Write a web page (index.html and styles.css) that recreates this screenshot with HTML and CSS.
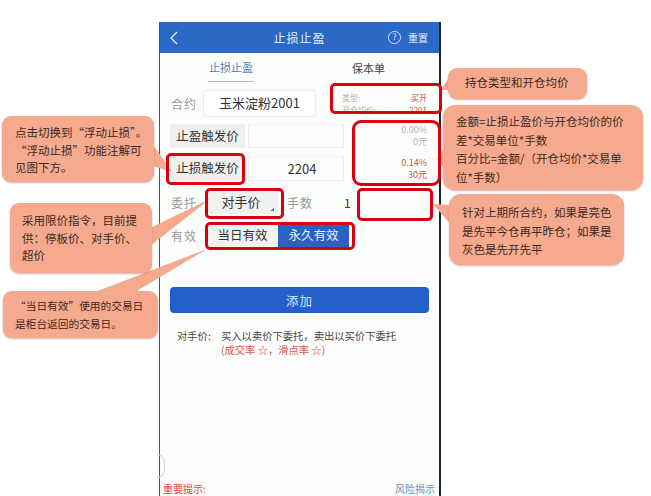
FILE: index.html
```html
<!DOCTYPE html>
<html lang="zh">
<head>
<meta charset="utf-8">
<title>止损止盈</title>
<link rel="stylesheet" href="styles.css">
</head>
<body>
<div class="stage">
  <main class="phone">
    <header class="nav">
      <svg class="back" viewBox="0 0 10 16" width="10" height="16"><path d="M8 2 L2 8 L8 14" fill="none" stroke="#dfe9f8" stroke-width="1.3"/></svg>
      <div class="nav-title">止损止盈</div>
      <div class="nav-right">
        <svg class="help" viewBox="0 0 16 16" width="15" height="15"><circle cx="8" cy="8" r="6.5" fill="none" stroke="#dfe9f8" stroke-width="1"/><text x="8" y="11" text-anchor="middle" class="help-q">?</text></svg>
        <span>重置</span>
      </div>
    </header>
    <nav class="tabs">
      <div class="tab tab-on"><span>止损止盈</span></div>
      <div class="tab"><span>保本单</span></div>
    </nav>
    <section class="form">
      <div class="row row-contract">
        <span class="label label-contract">合约</span>
        <div class="contract">玉米淀粉2001</div>
        <div class="info">
          <div class="info-line"><span>类型:</span><b>买开</b></div>
          <div class="info-line"><span>开仓均价:</span><b>2201</b></div>
        </div>
      </div>
      <div class="row row-price">
        <div class="trigger">止盈触发价</div>
        <div class="price"></div>
        <div class="profit grey"><div>0.00%</div><div>0元</div></div>
      </div>
      <div class="row row-price row-loss">
        <div class="trigger">止损触发价</div>
        <div class="price">2204</div>
        <div class="profit red"><div>0.14%</div><div>30元</div></div>
      </div>
      <div class="row row-order">
        <span class="label">委托</span>
        <div class="select">对手价<i class="corner"></i></div>
        <span class="label label-qty">手数</span>
        <span class="qty">1</span>
      </div>
      <div class="row row-valid">
        <span class="label">有效</span>
        <div class="segment">
          <div class="seg">当日有效</div>
          <div class="seg seg-on">永久有效</div>
        </div>
      </div>
      <button class="add">添加</button>
      <div class="note">
        <span class="note-head">对手价:</span>
        <div class="note-body">
          <div>买入以卖价下委托，卖出以买价下委托</div>
          <div class="note-red">(成交率 ☆，滑点率 ☆)</div>
        </div>
      </div>
    </section>
    <div class="spacer"><i class="handle"></i></div>
    <footer class="foot">
      <span class="foot-red">重要提示:</span>
      <span class="foot-blue">风险揭示</span>
    </footer>
  </main>

  <svg class="tails" width="651" height="496" viewBox="0 0 651 496">
    <path d="M150 140 L172 172 L150 165 Z" fill="#f5a98e"/>
    <path d="M150 228 L210 199 L150 246 Z" fill="#f5a98e"/>
    <path d="M95 292 L207 249 L135 292 Z" fill="#f5a98e"/>
    <path d="M450 76 L441 90 L450 90 Z" fill="#f5a98e"/>
    <path d="M446 145 L437 160 L446 170 Z" fill="#f5a98e"/>
    <path d="M452 205 L433 204 L452 226 Z" fill="#f5a98e"/>
  </svg>

  <div class="mark mark-info"></div>
  <div class="mark mark-profit"></div>
  <div class="mark mark-loss"></div>
  <div class="mark mark-select"></div>
  <div class="mark mark-qty"></div>
  <div class="mark mark-valid"></div>

  <div class="call call-a">点击切换到“浮动止损”。<br>“浮动止损”功能注解可<br>见图下方。</div>
  <div class="call call-b">采用限价指令，目前提<br>供：停板价、对手价、<br>超价</div>
  <div class="call call-c">“当日有效”使用的交易日<br>是柜台返回的交易日。</div>
  <div class="call call-d">持仓类型和开仓均价</div>
  <div class="call call-e">金额=止损止盈价与开仓均价的价<br>差*交易单位*手数<br>百分比=金额/（开仓均价*交易单<br>位*手数）</div>
  <div class="call call-f">针对上期所合约，如果是亮色<br>是先平今仓再平昨仓；如果是<br>灰色是先开先平</div>
</div>
</body>
</html>
```
FILE: styles.css
```css
* { box-sizing: border-box; }
html, body { margin: 0; padding: 0; background: #fff; }
body { font-family: "Noto Sans CJK SC", "Liberation Sans", sans-serif; color: #333; }
.stage { position: relative; width: 651px; height: 496px; overflow: hidden; background: #fff; padding: 22px 0 0 159px; }

.phone { width: 282px; height: 474px; display: flex; flex-direction: column; background: #fcfefc; border-left: 1px solid #555; border-right: 2px solid #222; }

.nav { height: 31px; flex: none; background: #2a69c6; color: #e6eefa; display: flex; align-items: center; position: relative; padding: 0 11px 0 9px; justify-content: space-between; }
.nav-title { position: absolute; left: 0; right: 0; text-align: center; font-size: 12px; letter-spacing: 1px; }
.nav-right { display: flex; align-items: center; gap: 6px; font-size: 10px; }
.help-q { font-size: 9px; fill: #dfe9f8; }

.tabs { height: 29px; flex: none; display: flex; font-size: 11px; }
.tab { display: flex; justify-content: center; align-items: center; color: #444; }
.tab-on { flex: 0 0 126px; padding-left: 16px; color: #4d7fc4; }
.tab:last-child { flex: 1; padding-left: 12px; }
.tab-on span { display: block; line-height: 27px; border-bottom: 1px solid #a9b9cf; height: 28px; margin-top: 1px; padding: 0 1px; }

.form { display: flex; flex-direction: column; padding: 8px 12px 0 10px; }
.row { display: flex; align-items: center; }
.label { font-size: 12px; color: #9a9a9a; width: 37px; flex: none; letter-spacing: 1px; padding-left: 1px; }
.label-contract { width: 33px; }

.row-contract { height: 27px; }
.contract { width: 113px; height: 27px; border: 1px solid #ececec; border-radius: 2px; font-size: 13px; text-align: center; line-height: 24px; color: #333; background: #fff; flex: none; }
.info { margin-left: 26px; width: 87px; font-size: 8px; line-height: 12px; color: #b0b0b0; }
.info-line { display: flex; justify-content: space-between; }
.info-line b { font-weight: 400; color: #d0473f; }

.row-price { height: 24px; margin-top: 7px; }
.row-loss { margin-top: 8px; height: 25px; }
.trigger { width: 75px; height: 100%; background: #eef0ee; font-size: 12.5px; text-align: center; line-height: 24px; color: #333; flex: none; }
.price { width: 96px; height: 100%; margin-left: 3px; padding-left: 12px; border: 1px solid #eeeeee; border-top-color: #f4f4f4; font-size: 13px; text-align: center; line-height: 24px; color: #333; flex: none; }
.profit { flex: 1; margin-right: 0; text-align: right; font-size: 9px; line-height: 12px; }
.grey { color: #b4b4b4; }
.red { color: #c0594f; }

.row-order { height: 26px; margin-top: 8px; }
.select { width: 71px; height: 24px; background: #eff1ef; font-size: 13px; line-height: 23px; text-align: center; padding-right: 3px; position: relative; flex: none; color: #333; }
.corner { position: absolute; right: 4px; bottom: 3px; width: 3px; height: 3px; background: linear-gradient(135deg, transparent 50%, #4b7fc4 50%); }
.label-qty { margin-left: 9px; width: 57px; padding-left: 0; }
.qty { font-size: 12px; width: 20px; }

.row-valid { height: 24px; margin-top: 8px; }
.segment { display: flex; width: 142px; height: 24px; flex: none; font-size: 12.5px; line-height: 24px; text-align: center; }
.seg { flex: 0 0 71px; background: #f1f2f1; color: #333; }
.seg-on { background: #2a62c4; color: #e8f0fb; }

.add { margin-top: 40px; width: 259px; height: 26px; background: #2460c8; color: #d6e4f8; border: 0; border-radius: 4px; font: inherit; font-size: 12.5px; letter-spacing: 1px; padding: 0; }

.note { display: flex; margin: 16px 0 0 7px; font-size: 10.3px; line-height: 14px; color: #444; }
.note-head { width: 44px; flex: none; }
.note-red { color: #d8534a; }

.spacer { flex: 1; position: relative; }
.handle { position: absolute; left: -3px; bottom: 3px; width: 8px; height: 24px; border: 1px solid #d4d4d4; border-left: 0; border-radius: 0 8px 8px 0; }
.foot { height: 15px; flex: none; display: flex; justify-content: space-between; font-size: 10px; line-height: 15px; padding: 0 4px 0 3px; }
.foot-red { color: #d9493f; }
.foot-blue { color: #6d8fb5; }

.tails { position: absolute; left: 0; top: 0; }
.mark { position: absolute; border: 3px solid #d8000f; border-radius: 5px; }
.mark-info { left: 330px; top: 83px; width: 112px; height: 31px; }
.mark-profit { left: 352px; top: 120px; width: 89px; height: 66px; border-radius: 9px; }
.mark-loss { left: 166px; top: 153px; width: 79px; height: 32px; }
.mark-select { left: 205px; top: 188px; width: 79px; height: 31px; }
.mark-qty { left: 357px; top: 188px; width: 76px; height: 33px; }
.mark-valid { left: 205px; top: 222px; width: 150px; height: 28px; }

.call { position: absolute; background: #f5a98e; color: #3d2a20; border-radius: 9px; font-size: 11.5px; line-height: 17.5px; box-shadow: 0 1px 2px rgba(150,90,60,.45); white-space: nowrap; }
.call-a { left: 2px; top: 116px; width: 152px; height: 66px; padding: 8px 0 0 13px; }
.call-b { left: 10px; top: 203px; width: 142px; height: 70px; padding: 9px 0 0 12px; }
.call-c { left: 3px; top: 291px; width: 155px; height: 47px; padding: 6px 0 0 12px; font-size: 10.7px; line-height: 18px; }
.call-d { left: 448px; top: 68px; width: 139px; height: 31px; padding: 6px 0 0 17px; }
.call-e { left: 443px; top: 105px; width: 200px; height: 85px; padding: 7px 0 0 13px; line-height: 18.5px; border-radius: 12px; }
.call-f { left: 449px; top: 194px; width: 175px; height: 71px; padding: 9px 0 0 13px; line-height: 18.5px; border-radius: 12px; }
```
